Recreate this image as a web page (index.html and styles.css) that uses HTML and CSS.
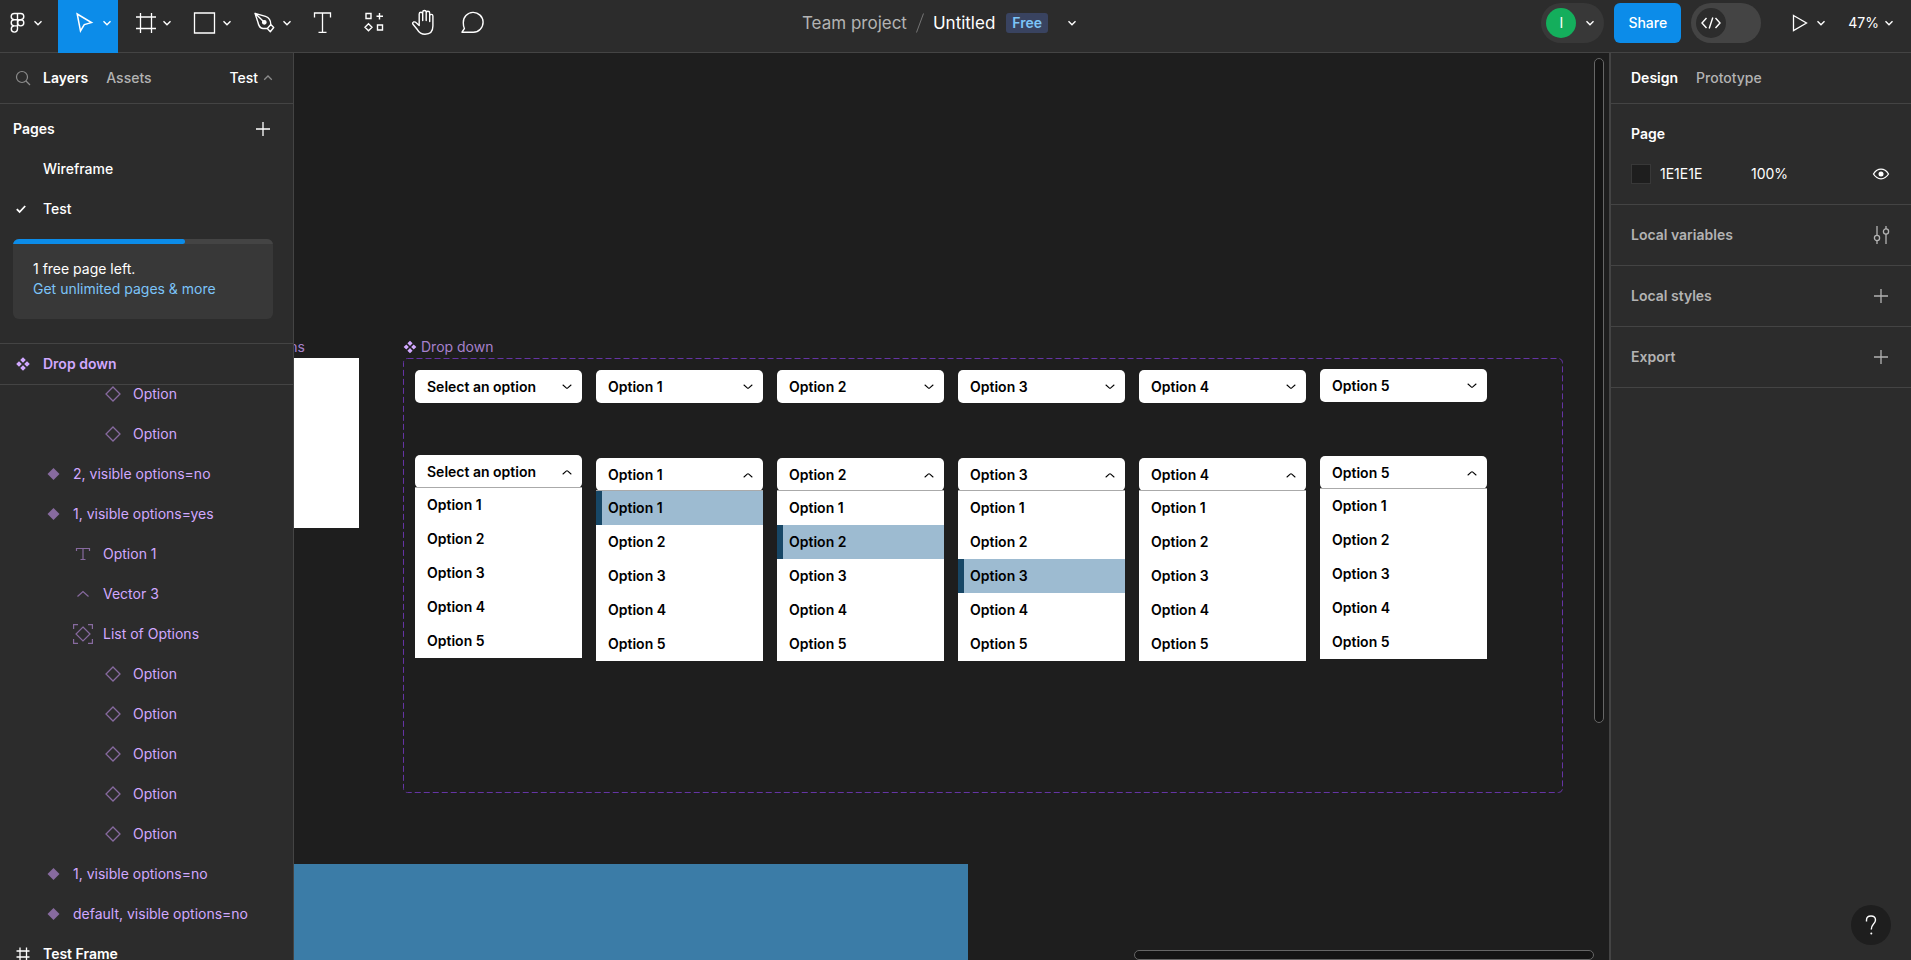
FILE: index.html
```html
<!DOCTYPE html>
<html lang="en">
<head>
<meta charset="utf-8">
<meta name="viewport" content="width=device-width, initial-scale=1">
<title>Untitled – Team project</title>
<link rel="stylesheet" href="styles.css">
</head>
<body>
<svg class="sprite" aria-hidden="true">
  <symbol id="down" viewBox="0 0 10 10"><path d="M1.5 3.2 5 6.7 8.5 3.2" fill="none" stroke="currentColor" stroke-width="1.4"/></symbol>
  <symbol id="up" viewBox="0 0 10 10"><path d="M1.2 6.8 5 3 8.8 6.8" fill="none" stroke="currentColor" stroke-width="1.3"/></symbol>
  <symbol id="plus" viewBox="0 0 20 20"><path d="M10 3v14M3 10h14" fill="none" stroke="currentColor" stroke-width="1.3"/></symbol>
  <symbol id="instance" viewBox="0 0 20 20"><path d="M10 3 17 10 10 17 3 10Z" fill="none" stroke="currentColor" stroke-width="1.3"/></symbol>
  <symbol id="variant" viewBox="0 0 20 20"><path d="M10.500 4 16.500 10 10.500 16 4.500 10Z" fill="currentColor"/></symbol>
  <symbol id="component" viewBox="0 0 20 20"><path d="M10 3.2 12.8 6 10 8.8 7.2 6ZM10 11.2 12.8 14 10 16.8 7.2 14ZM6 7.2 8.8 10 6 12.8 3.2 10ZM14 7.2 16.8 10 14 12.8 11.2 10Z" fill="currentColor"/></symbol>
  <symbol id="option-down" viewBox="0 0 12 12"><path d="M2 4 5.200 6.900Q6 7.600 6.800 6.900L10 4" fill="none" stroke="currentColor" stroke-width="1.100" stroke-linecap="round"/></symbol>
  <symbol id="option-up" viewBox="0 0 12 12"><path d="M2 8 5.200 5.100Q6 4.400 6.800 5.100L10 8" fill="none" stroke="currentColor" stroke-width="1.100" stroke-linecap="round"/></symbol>
</svg>

<div class="app">
  <header class="topbar">
    <nav class="tools" aria-label="Tools">
      <button class="tool tool-menu" aria-label="Main menu">
        <svg class="icon-l" viewBox="0 0 30 30" fill="none" stroke="currentColor" stroke-width="1.4"><path d="M14.500 5.500H11.300a3.100 3.100 0 0 0 0 6.200H14.500ZM14.500 5.500h3.200a3.100 3.100 0 0 1 0 6.200H14.500M14.500 11.700H11.300a3.100 3.100 0 0 0 0 6.200H14.500ZM14.500 17.900H11.300a3.100 3.100 0 1 0 3.200 3.200Z"/><circle cx="17.700" cy="14.800" r="3.100"/></svg>
        <svg class="icon-s"><use href="#down"/></svg>
      </button>
      <button class="tool tool-split tool-active" aria-label="Move">
        <svg class="icon-l" viewBox="0 0 30 30" fill="none" stroke="currentColor" stroke-width="1.500"><path d="M8.200 6 22.500 14.600 15.300 16.600 11.500 23Z"/></svg>
        <svg class="icon-s"><use href="#down"/></svg>
      </button>
      <button class="tool tool-split" aria-label="Frame">
        <svg class="icon-l" viewBox="0 0 30 30" fill="none" stroke="currentColor" stroke-width="1.3"><path d="M11.500 5v20M22.500 5v20M7 9h20M7 20.500h20"/></svg>
        <svg class="icon-s"><use href="#down"/></svg>
      </button>
      <button class="tool tool-split" aria-label="Rectangle">
        <svg class="icon-l" viewBox="0 0 30 30" fill="none" stroke="currentColor" stroke-width="1.3"><path d="M5.500 5h20v20h-20Z"/></svg>
        <svg class="icon-s"><use href="#down"/></svg>
      </button>
      <button class="tool tool-split" aria-label="Pen">
        <svg class="icon-l" viewBox="0 0 30 30" fill="none" stroke="currentColor" stroke-width="1.400" stroke-linejoin="round"><path d="M6 5.300 16.500 8.300Q21.800 10 21.800 16.500L18.300 20.500H14Q10 20 9 14.500ZM6 5.300 15.300 14.300M21.800 16.500 24.700 19.500 21.300 23.700 18.300 20.500"/><circle cx="15.300" cy="14.300" r="1.700" fill="currentColor"/></svg>
        <svg class="icon-s"><use href="#down"/></svg>
      </button>
      <button class="tool" aria-label="Text">
        <svg class="icon-l" viewBox="0 0 30 30" fill="none" stroke="currentColor" stroke-width="1.300"><path d="M6.500 9.500V5h16v4.500M14.500 5v19M10.500 24.300h8"/></svg>
      </button>
      <button class="tool" aria-label="Resources">
        <svg class="icon-l" viewBox="0 0 30 30" fill="none" stroke="currentColor" stroke-width="1.400"><path d="M8 5.500h5v5H8ZM21.500 5v6.500M18.500 8.300h6.500M19.500 17h5v5h-5ZM10.500 15.800 14 19.300 10.500 22.800 7 19.300Z"/></svg>
      </button>
      <button class="tool" aria-label="Hand">
        <svg class="icon-l" viewBox="0 0 30 30" fill="none" stroke="currentColor" stroke-width="1.400" stroke-linecap="round" stroke-linejoin="round"><path d="M11.200 17.500V6a1.700 1.700 0 0 1 3.500 0V12.500M14.700 6V4.300a1.700 1.700 0 0 1 3.500 0V12.500M18.200 5a1.700 1.700 0 0 1 3.500 0V13.500M21.700 8a1.600 1.600 0 0 1 3.200 0V18Q24.900 26.200 17 26.200 12 26.200 9.500 21.800L5 16.300Q4 14.800 5.500 14 7 13.400 8.500 15L11.200 17.500"/></svg>
      </button>
      <button class="tool" aria-label="Comment">
        <svg class="icon-l" viewBox="0 0 30 30" fill="none" stroke="currentColor" stroke-width="1.400" stroke-linejoin="round"><path d="M4 24.200 6.400 20.500Q5.300 18.300 5.300 14.700a9.900 9.900 0 1 1 10 9.500Z"/></svg>
      </button>
    </nav>
    <div class="title">
      <a class="project" href="#">Team project</a>
      <svg class="slash" viewBox="0 0 8 20"><path d="M.5 19.500 7.500.5" stroke="currentColor"/></svg>
      <span class="file">Untitled</span>
      <span class="badge">Free</span>
      <button class="plain" aria-label="File menu"><svg class="icon-s"><use href="#down"/></svg></button>
    </div>
    <div class="actions">
      <button class="people" aria-label="Collaborators"><span class="avatar">I</span><svg class="icon-s"><use href="#down"/></svg></button>
      <button class="share">Share</button>
      <label class="devmode"><input type="checkbox" aria-label="Dev Mode"><span class="knob"><svg class="code" viewBox="0 0 20 14" fill="none" stroke="currentColor" stroke-width="1.400"><path d="M5.500 2 1 7l4.500 5M14.500 2 19 7l-4.500 5M11.800 1.500 8.200 12.500"/></svg></span></label>
      <button class="present" aria-label="Present"><svg class="play" viewBox="0 0 16 18" fill="none" stroke="currentColor" stroke-width="1.300"><path d="M1.500 1.500 14.500 9 1.500 16.500Z"/></svg><svg class="icon-s"><use href="#down"/></svg></button>
      <button class="zoom">47%<svg class="icon-s"><use href="#down"/></svg></button>
    </div>
  </header>

  <main class="workspace">
    <aside class="left">
      <div class="panel-head">
        <button class="plain search" aria-label="Search"><svg class="icon-m" viewBox="0 0 20 20" fill="none" stroke="currentColor" stroke-width="1.200"><circle cx="9" cy="9" r="5.500"/><path d="M13 13 17 17"/></svg></button>
        <button class="plain tab tab-on">Layers</button>
        <button class="plain tab">Assets</button>
        <button class="plain page-switch">Test<svg class="icon-s"><use href="#up"/></svg></button>
      </div>
      <section class="pages">
        <div class="pages-head"><h2>Pages</h2><button class="plain" aria-label="Add page"><svg class="icon-m"><use href="#plus"/></svg></button></div>
        <button class="plain page">Wireframe</button>
        <button class="plain page page-on"><svg class="check" viewBox="0 0 10 10" fill="none" stroke="currentColor" stroke-width="1.800"><path d="M.8 5.200 3.600 8 9.200 2"/></svg>Test</button>
        <div class="quota">
          <div class="meter"><div class="meter-fill"></div></div>
          <p>1 free page left.</p>
          <a href="#">Get unlimited pages &amp; more</a>
        </div>
      </section>
      <div class="layer layer-root layer-sticky"><svg class="icon-m"><use href="#component"/></svg>Drop down</div>
      <div class="layers">
        <ul>
          <li class="layer depth-3"><svg class="icon-m"><use href="#instance"/></svg>Option</li>
          <li class="layer depth-3"><svg class="icon-m"><use href="#instance"/></svg>Option</li>
          <li class="layer depth-1"><svg class="icon-m"><use href="#variant"/></svg>2, visible options=no</li>
          <li class="layer depth-1"><svg class="icon-m"><use href="#variant"/></svg>1, visible options=yes</li>
          <li class="layer depth-2"><svg class="icon-m" viewBox="0 0 20 20" fill="none" stroke="currentColor" stroke-width="1.200"><path d="M3.500 7V4.500h13V7M10 4.500v11M7.500 15.500h5"/></svg>Option 1</li>
          <li class="layer depth-2"><svg class="icon-m" viewBox="0 0 20 20" fill="none" stroke="currentColor" stroke-width="1.200"><path d="M4.500 12.500 10 7.500 15.500 12.500"/></svg>Vector 3</li>
          <li class="layer depth-2"><svg class="icon-m" viewBox="0 0 20 20" fill="none" stroke="currentColor" stroke-width="1.200"><path d="M10 3 17 10 10 17 3 10ZM.6 5V.6H5M15 .6h4.400V5M19.400 15v4.400H15M5 19.400H.6V15"/></svg>List of Options</li>
          <li class="layer depth-3"><svg class="icon-m"><use href="#instance"/></svg>Option</li>
          <li class="layer depth-3"><svg class="icon-m"><use href="#instance"/></svg>Option</li>
          <li class="layer depth-3"><svg class="icon-m"><use href="#instance"/></svg>Option</li>
          <li class="layer depth-3"><svg class="icon-m"><use href="#instance"/></svg>Option</li>
          <li class="layer depth-3"><svg class="icon-m"><use href="#instance"/></svg>Option</li>
          <li class="layer depth-1"><svg class="icon-m"><use href="#variant"/></svg>1, visible options=no</li>
          <li class="layer depth-1"><svg class="icon-m"><use href="#variant"/></svg>default, visible options=no</li>
          <li class="layer layer-root layer-frame"><svg class="icon-m" viewBox="0 0 20 20" fill="none" stroke="currentColor" stroke-width="1.300"><path d="M7 3.500v13M13.500 3.500v13M3.500 7h13M3.500 13h13"/></svg>Test Frame</li>
        </ul>
      </div>
    </aside>

    <div class="canvas">
      <span class="node label-cut">Options</span>
      <div class="node sheet"></div>
      <div class="node set-label"><svg viewBox="2.500 2.500 15 15"><use href="#component" width="20" height="20"/></svg>Drop down</div>
      <div class="node set">
        <div class="variants variants-default">
          <button class="select">Select an option<svg><use href="#option-down"/></svg></button>
          <div class="open">
            <button class="select">Select an option<svg><use href="#option-up"/></svg></button>
            <ul class="options"><li>Option 1</li><li>Option 2</li><li>Option 3</li><li>Option 4</li><li>Option 5</li></ul>
          </div>
        </div>
        <div class="variants">
          <button class="select">Option 1<svg><use href="#option-down"/></svg></button>
          <div class="open">
            <button class="select">Option 1<svg><use href="#option-up"/></svg></button>
            <ul class="options"><li class="picked">Option 1</li><li>Option 2</li><li>Option 3</li><li>Option 4</li><li>Option 5</li></ul>
          </div>
        </div>
        <div class="variants">
          <button class="select">Option 2<svg><use href="#option-down"/></svg></button>
          <div class="open">
            <button class="select">Option 2<svg><use href="#option-up"/></svg></button>
            <ul class="options"><li>Option 1</li><li class="picked">Option 2</li><li>Option 3</li><li>Option 4</li><li>Option 5</li></ul>
          </div>
        </div>
        <div class="variants">
          <button class="select">Option 3<svg><use href="#option-down"/></svg></button>
          <div class="open">
            <button class="select">Option 3<svg><use href="#option-up"/></svg></button>
            <ul class="options"><li>Option 1</li><li>Option 2</li><li class="picked">Option 3</li><li>Option 4</li><li>Option 5</li></ul>
          </div>
        </div>
        <div class="variants">
          <button class="select">Option 4<svg><use href="#option-down"/></svg></button>
          <div class="open">
            <button class="select">Option 4<svg><use href="#option-up"/></svg></button>
            <ul class="options"><li>Option 1</li><li>Option 2</li><li>Option 3</li><li>Option 4</li><li>Option 5</li></ul>
          </div>
        </div>
        <div class="variants variants-last">
          <button class="select">Option 5<svg><use href="#option-down"/></svg></button>
          <div class="open">
            <button class="select">Option 5<svg><use href="#option-up"/></svg></button>
            <ul class="options"><li>Option 1</li><li>Option 2</li><li>Option 3</li><li>Option 4</li><li>Option 5</li></ul>
          </div>
        </div>
        <svg class="outline" aria-hidden="true"><rect x=".5" y=".5" width="100%" height="100%" rx="4"/></svg>
      </div>
      <div class="node hero"></div>
      <div class="scroll scroll-y"></div>
      <div class="scroll scroll-x"></div>
    </div>

    <aside class="right">
      <div class="panel-head">
        <button class="plain tab tab-on">Design</button>
        <button class="plain tab">Prototype</button>
      </div>
      <section class="page-props">
        <h2>Page</h2>
        <div class="fill">
          <button class="swatch" aria-label="Page colour"></button>
          <input class="hex" aria-label="Hex" value="1E1E1E">
          <input class="alpha" aria-label="Opacity" value="100%">
          <button class="plain" aria-label="Toggle visibility"><svg class="icon-m" viewBox="0 0 20 20" fill="none" stroke="currentColor" stroke-width="1.300"><path d="M2.500 10Q5.500 5.200 10 5.200T17.500 10Q14.500 14.800 10 14.800T2.500 10Z"/><circle cx="10" cy="10" r="2.500" fill="currentColor" stroke="none"/></svg></button>
        </div>
      </section>
      <section class="row"><h2>Local variables</h2><button class="plain" aria-label="Open variables"><svg class="icon-m" viewBox="0 0 20 20" fill="none" stroke="currentColor" stroke-width="1.300"><path d="M6 1v9.500M6 15.500V19M15 1v3M15 9v10"/><circle cx="6" cy="13" r="2.600"/><circle cx="15" cy="6.500" r="2.600"/></svg></button></section>
      <section class="row"><h2>Local styles</h2><button class="plain" aria-label="Add style"><svg class="icon-m"><use href="#plus"/></svg></button></section>
      <section class="row"><h2>Export</h2><button class="plain" aria-label="Add export"><svg class="icon-m"><use href="#plus"/></svg></button></section>
      <button class="help" aria-label="Help"><svg viewBox="0 0 14 22" fill="none" stroke="currentColor" stroke-width="1.400"><path d="M2.500 7.500V6Q2.500 2 7 2T11.500 6Q11.500 8 9.500 10T7.300 15.500"/><circle cx="7.300" cy="19.500" r="1" fill="currentColor" stroke="none"/></svg></button>
    </aside>
  </main>
</div>
</body>
</html>
```
FILE: styles.css
```css
* { box-sizing: border-box; }

:root {
  --panel: #2c2c2c;
  --line: #444;
  --blue: #0c8ce9;
  --muted: #b3b3b3;
  --violet: #d1a8ff;
  --violet-dim: #876a9f;
}

body {
  margin: 0;
  background: #1e1e1e;
  color: #fff;
  font: 14px/20px Inter, "Liberation Sans", sans-serif;
}

button, input { font: inherit; color: inherit; }
button { border: 0; padding: 0; background: none; }
svg { display: block; flex: none; }
a { text-decoration: none; }
h2 { margin: 0; font-size: 14px; font-weight: 600; }
ul { list-style: none; margin: 0; padding: 0; }

.sprite { position: absolute; width: 0; height: 0; }
.icon-s { width: 10px; height: 10px; }
.icon-m { width: 20px; height: 20px; }
.icon-l { width: 30px; height: 30px; }
.plain { display: flex; align-items: center; }

.app { display: flex; flex-direction: column; height: 100vh; overflow: hidden; }

/* Top bar */
.topbar {
  display: grid;
  grid-template-columns: 1fr auto 1fr;
  flex: none;
  height: 53px;
  background: var(--panel);
  border-bottom: 1px solid var(--line);
}
.tools { display: flex; }
.tool {
  display: flex;
  align-items: center;
  width: 50px;
  height: 53px;
  padding: 0 0 7px 10px;
}
.tool-split { width: 60px; gap: 3px; padding-left: 11px; }
.tool-menu { width: 58px; gap: 0; padding-left: 3px; }
.tool-active { background: var(--blue); }

.title {
  display: flex;
  align-items: center;
  height: 46px;
  padding-right: 32px;
  font-size: 17px;
}
.project { color: var(--muted); }
.slash { width: 8px; height: 20px; margin: 0 9px; color: #757575; }
.badge {
  margin: 0 19px 0 11px;
  padding: 0 6px;
  border-radius: 3px;
  background: #394360;
  color: #7cc4f8;
  font-size: 14px;
  font-weight: 600;
}

.actions { display: flex; align-items: center; justify-content: flex-end; height: 46px; }
.people {
  display: flex;
  align-items: center;
  gap: 9px;
  width: 63px;
  height: 40px;
  padding-left: 5px;
  border-radius: 20px;
  background: #383838;
}
.avatar {
  width: 30px;
  height: 30px;
  border-radius: 50%;
  background: #14ae5c;
  line-height: 30px;
  text-align: center;
}
.share {
  width: 67px;
  height: 40px;
  margin: 0 10px;
  border-radius: 6px;
  background: var(--blue);
  font-weight: 500;
}
.devmode {
  display: flex;
  align-items: center;
  width: 70px;
  height: 40px;
  padding: 5px;
  border-radius: 20px;
  background: #444;
}
.devmode input { position: absolute; opacity: 0; }
.knob {
  display: grid;
  place-items: center;
  width: 30px;
  height: 30px;
  border-radius: 50%;
  background: var(--panel);
}
.code { width: 20px; height: 14px; }
.present { display: flex; align-items: center; gap: 8px; margin: 0 22px 0 31px; }
.play { width: 16px; height: 18px; }
.zoom { display: flex; align-items: center; gap: 5px; margin-right: 17px; }

/* Workspace */
.workspace { display: flex; flex: 1; min-height: 0; }
.left {
  display: flex;
  flex-direction: column;
  flex: none;
  width: 294px;
  background: var(--panel);
  border-right: 1px solid var(--line);
}
.panel-head {
  display: flex;
  align-items: center;
  height: 51px;
  border-bottom: 1px solid var(--line);
}
.search { margin: 0 10px 0 13px; color: #8c8c8c; }
.tab { color: var(--muted); font-weight: 500; }
.tab-on { margin-right: 18px; color: #fff; font-weight: 600; }
.page-switch { gap: 5px; margin: 0 20px 0 auto; font-weight: 500; }
.page-switch svg { color: #8c8c8c; }

.pages { padding: 5px 20px 24px 13px; border-bottom: 1px solid var(--line); }
.pages-head { display: flex; align-items: center; justify-content: space-between; height: 40px; }
.page { gap: 17px; width: 100%; height: 40px; padding-left: 30px; font-weight: 500; }
.page-on { padding-left: 3px; }
.check { width: 10px; height: 10px; }
.quota {
  height: 80px;
  margin-top: 10px;
  border-radius: 6px;
  overflow: hidden;
  background: #383838;
}
.meter { height: 5px; margin-bottom: 15px; background: #444; }
.meter-fill { width: 66%; height: 5px; border-radius: 0 3px 3px 0; background: var(--blue); }
.quota p { margin: 0 20px; }
.quota a { margin: 0 20px; color: #7cc4f8; }

.layers { flex: 1; min-height: 0; overflow: hidden; }
.layers ul { margin-top: -11px; }
.layer { display: flex; align-items: center; gap: 10px; height: 40px; color: var(--violet); }
.layer svg { color: var(--violet-dim); }
.depth-1 { padding-left: 43px; }
.depth-2 { padding-left: 73px; }
.depth-3 { padding-left: 103px; }
.layer-root { padding-left: 13px; font-weight: 600; }
.layer-root svg { color: inherit; }
.layer-sticky { flex: none; height: 41px; border-bottom: 1px solid var(--line); }
.layer-frame { color: #fff; }

/* Canvas: artwork is placed freely on an open plane */
.canvas { position: relative; flex: 1; min-width: 0; overflow: hidden; background: #1e1e1e; }
.node { position: absolute; }
.label-cut { right: calc(100% - 11px); top: 284px; color: #a681cc; }
.sheet { left: 0; top: 305px; width: 65px; height: 170px; background: #fff; }
.set-label { display: flex; align-items: center; gap: 4px; left: 109px; top: 284px; color: #a681cc; }
.set-label svg { width: 14px; height: 14px; color: var(--violet); }
.set {
  display: flex;
  align-items: flex-start;
  gap: 14px;
  left: 109px;
  top: 305px;
  width: 1159px;
  height: 434px;
  padding-left: 12px;
}
.outline { position: absolute; inset: 0; width: 100%; height: 100%; overflow: visible; }
.outline rect { fill: none; stroke: #6534a4; stroke-width: 1; stroke-dasharray: 6 3; }
.variants {
  display: flex;
  flex-direction: column;
  gap: 55px;
  width: 167px;
  padding-top: 12px;
  color: #000;
  font-weight: 600;
}
.variants-default { gap: 52px; }
.variants-last { gap: 54px; padding-top: 11px; }
.select {
  display: flex;
  align-items: center;
  justify-content: space-between;
  width: 100%;
  height: 33px;
  padding: 0 9px 0 12px;
  border-radius: 5px;
  background: #fff;
  font-weight: 600;
}
.select svg { width: 12px; height: 12px; }
.options { margin-top: -1px; border-top: 1px solid #aaa; background: #fff; }
.options li { height: 34px; padding-left: 12px; line-height: 34px; }
.options .picked { padding-left: 6px; border-left: 6px solid #174766; background: #9dbbd1; }
.hero { left: 0; top: 811px; width: 674px; height: 240px; background: #3b7ca7; }
.scroll {
  position: absolute;
  border: 1px solid #666;
  border-radius: 5px;
  background: #141414;
}
.scroll-y { top: 5px; right: 5px; width: 10px; height: 665px; }
.scroll-x { bottom: 0; right: 15px; width: 460px; height: 10px; }

/* Right panel */
.right {
  position: relative;
  flex: none;
  width: 302px;
  background: var(--panel);
  border-left: 2px solid var(--line);
}
.right .panel-head { padding-left: 20px; }
.page-props { height: 101px; padding: 20px 20px 0; border-bottom: 1px solid var(--line); }
.fill { display: flex; align-items: center; height: 20px; margin-top: 20px; }
.swatch { width: 20px; height: 20px; border: 1px solid #383838; background: #1e1e1e; }
.fill input { border: 0; padding: 0; background: none; outline: 0; }
.hex { width: 91px; margin-left: 9px; }
.alpha { width: 60px; margin-right: auto; }
.row {
  display: flex;
  align-items: center;
  justify-content: space-between;
  height: 61px;
  padding: 0 20px;
  border-bottom: 1px solid var(--line);
  color: var(--muted);
}
.help {
  position: absolute;
  right: 20px;
  bottom: 15px;
  display: grid;
  place-items: center;
  width: 40px;
  height: 40px;
  border-radius: 50%;
  background: #1e1e1e;
}
.help svg { width: 14px; height: 22px; }
```
